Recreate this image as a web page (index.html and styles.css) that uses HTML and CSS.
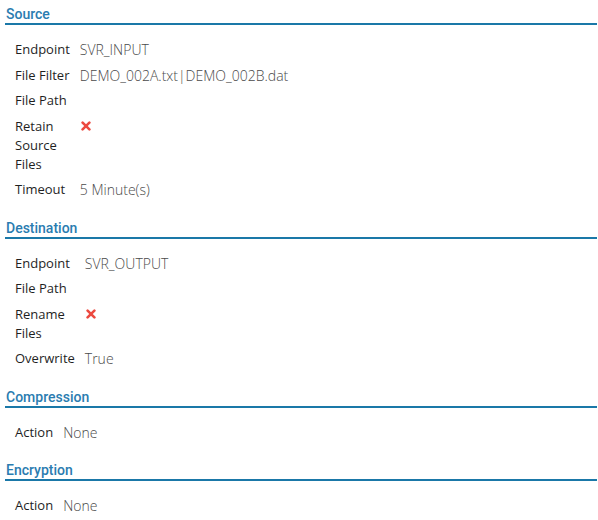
FILE: index.html
```html
<!DOCTYPE html>
<html lang="en">
<head>
<meta charset="utf-8">
<title>Transfer details</title>
<link rel="stylesheet" href="styles.css">
</head>
<body>
<div class="page">
  <section class="section">
    <h2 class="section-title">Source</h2>
    <table class="props">
      <tr><td class="label">Endpoint</td><td class="value">SVR_INPUT</td></tr>
      <tr><td class="label">File Filter</td><td class="value">DEMO_002A.txt|DEMO_002B.dat</td></tr>
      <tr><td class="label">File Path</td><td class="value"></td></tr>
      <tr><td class="label">Retain Source Files</td><td class="value"><svg class="no-icon" viewBox="0 0 10 10" width="10" height="10"><path d="M1.6 1.6 L8.4 8.4 M8.4 1.6 L1.6 8.4"/></svg></td></tr>
      <tr><td class="label">Timeout</td><td class="value">5 Minute(s)</td></tr>
    </table>
  </section>
  <section class="section">
    <h2 class="section-title">Destination</h2>
    <table class="props">
      <tr><td class="label">Endpoint</td><td class="value">SVR_OUTPUT</td></tr>
      <tr><td class="label">File Path</td><td class="value"></td></tr>
      <tr><td class="label">Rename Files</td><td class="value"><svg class="no-icon" viewBox="0 0 10 10" width="10" height="10"><path d="M1.6 1.6 L8.4 8.4 M8.4 1.6 L1.6 8.4"/></svg></td></tr>
      <tr><td class="label">Overwrite</td><td class="value">True</td></tr>
    </table>
  </section>
  <section class="section">
    <h2 class="section-title">Compression</h2>
    <table class="props">
      <tr><td class="label">Action</td><td class="value">None</td></tr>
    </table>
  </section>
  <section class="section">
    <h2 class="section-title">Encryption</h2>
    <table class="props">
      <tr><td class="label">Action</td><td class="value">None</td></tr>
    </table>
  </section>
</div>
</body>
</html>
```
FILE: styles.css
```css
html, body {
  margin: 0;
  padding: 0;
  background: #ffffff;
}

body {
  font-family: "Open Sans", "Liberation Sans", sans-serif;
  color: #222222;
}

.page {
  display: flex;
  flex-direction: column;
  gap: 16px;
  padding: 5px 1px 0 5px;
}

.section-title {
  margin: 0;
  font-family: Roboto, "Liberation Sans", sans-serif;
  font-weight: 500;
  font-size: 14px;
  line-height: 18px;
  color: #2a7cb0;
  padding-left: 1px;
  border-bottom: 2px solid #1a78a8;
}

.props {
  width: 100%;
  border-collapse: collapse;
  margin-top: 12px;
}

.props td {
  padding: 3.25px 0;
  vertical-align: top;
  line-height: 19px;
}

.props .label {
  width: 1%;
  padding-left: 10px;
  padding-right: 10px;
  font-size: 13px;
  color: #1f1f1f;
}

.props .value {
  font-size: 14px;
  font-weight: 300;
  color: #4a4a4a;
}

.no-icon {
  display: block;
  margin-top: 4px;
  margin-left: 1px;
  fill: none;
  stroke: #ec4a40;
  stroke-width: 2.6;
  stroke-linecap: round;
}
```
